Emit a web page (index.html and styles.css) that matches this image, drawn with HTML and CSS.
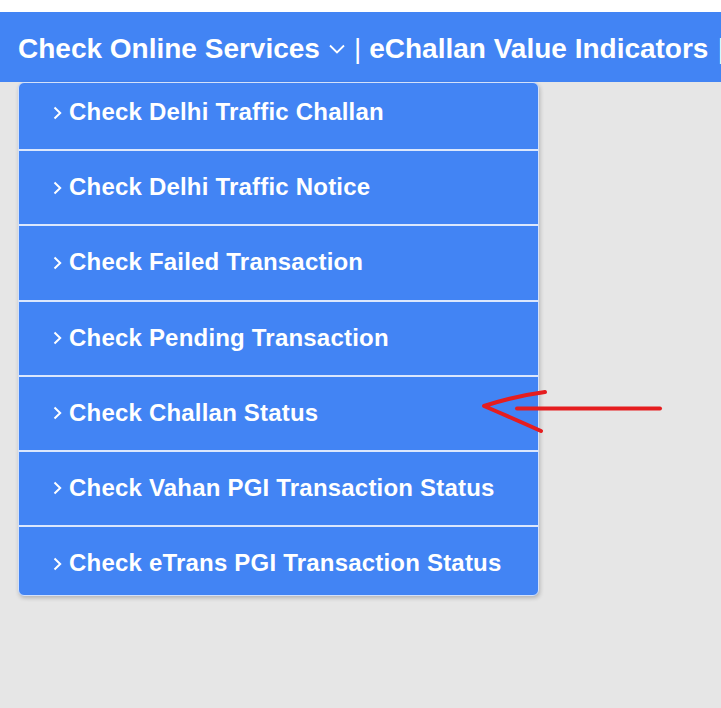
FILE: index.html
```html
<!DOCTYPE html>
<html lang="en">
<head>
<meta charset="utf-8">
<title>Check Online Services</title>
<link rel="stylesheet" href="styles.css">
</head>
<body>
<div class="top-strip"></div>
<header class="nav">
  <span class="nav-title">Check Online Services</span>
  <svg class="nav-caret" width="16" height="10" viewBox="0 0 16 10"><polyline points="1,1.5 8,8.5 15,1.5" fill="none" stroke="#fff" stroke-width="1.8"/></svg>
  <span class="nav-sep">|</span>
  <span class="nav-title">eChallan Value Indicators</span>
  <span class="nav-sep">|</span>
</header>
<main class="page">
  <ul class="dropdown">
    <li class="item"><svg class="chev" width="9" height="14" viewBox="0 0 9 14"><polyline points="1.5,1.5 7.2,7 1.5,12.5" fill="none" stroke="#fff" stroke-width="2"/></svg><span>Check Delhi Traffic Challan</span></li>
    <li class="item"><svg class="chev" width="9" height="14" viewBox="0 0 9 14"><polyline points="1.5,1.5 7.2,7 1.5,12.5" fill="none" stroke="#fff" stroke-width="2"/></svg><span>Check Delhi Traffic Notice</span></li>
    <li class="item"><svg class="chev" width="9" height="14" viewBox="0 0 9 14"><polyline points="1.5,1.5 7.2,7 1.5,12.5" fill="none" stroke="#fff" stroke-width="2"/></svg><span>Check Failed Transaction</span></li>
    <li class="item"><svg class="chev" width="9" height="14" viewBox="0 0 9 14"><polyline points="1.5,1.5 7.2,7 1.5,12.5" fill="none" stroke="#fff" stroke-width="2"/></svg><span>Check Pending Transaction</span></li>
    <li class="item"><svg class="chev" width="9" height="14" viewBox="0 0 9 14"><polyline points="1.5,1.5 7.2,7 1.5,12.5" fill="none" stroke="#fff" stroke-width="2"/></svg><span>Check Challan Status</span></li>
    <li class="item"><svg class="chev" width="9" height="14" viewBox="0 0 9 14"><polyline points="1.5,1.5 7.2,7 1.5,12.5" fill="none" stroke="#fff" stroke-width="2"/></svg><span>Check Vahan PGI Transaction Status</span></li>
    <li class="item"><svg class="chev" width="9" height="14" viewBox="0 0 9 14"><polyline points="1.5,1.5 7.2,7 1.5,12.5" fill="none" stroke="#fff" stroke-width="2"/></svg><span>Check eTrans PGI Transaction Status</span></li>
  </ul>
</main>
<svg class="annotation" width="721" height="708" viewBox="0 0 721 708">
  <path d="M545 392 Q515 396 484 406 Q512 418 541 431" fill="none" stroke="#e51d1f" stroke-width="4" stroke-linecap="round" stroke-linejoin="round"/>
  <path d="M517 408.5 L660 408.5" fill="none" stroke="#e51d1f" stroke-width="4" stroke-linecap="round"/>
</svg>
</body>
</html>
```
FILE: styles.css
```css
* { box-sizing: border-box; }
html, body {
  margin: 0;
  padding: 0;
  height: 100%;
}
body {
  background: #e6e6e6;
  font-family: "Liberation Sans", Arial, sans-serif;
  overflow: hidden;
  position: relative;
}
.top-strip {
  height: 12px;
  background: #ffffff;
}
.nav {
  height: 70px;
  padding-top: 3px;
  background: #4284f4;
  color: #ffffff;
  display: flex;
  align-items: center;
  padding-left: 18px;
  white-space: nowrap;
  overflow: hidden;
  font-size: 28px;
  font-weight: bold;
}
.nav-caret {
  margin-left: 9px;
  margin-top: 0;
  flex: none;
}
.nav-sep {
  font-weight: normal;
  margin: 0 8px 0 9px;
}
.page {
  padding-left: 18px;
}
.dropdown {
  list-style: none;
  margin: 0;
  padding: 0;
  width: 521px;
  background: #4284f4;
  border: 1px solid #d3e1fb;
  border-radius: 6px;
  box-shadow: 1px 2px 4px rgba(0, 0, 0, 0.22);
  overflow: hidden;
}
.item {
  display: flex;
  align-items: center;
  gap: 7px;
  padding: 22px 0 23.2px 34px;
  border-top: 2px solid #dbe7fd;
  color: #ffffff;
  font-size: 24px;
  font-weight: bold;
  line-height: 28px;
  letter-spacing: 0.2px;
  white-space: nowrap;
}
.item:first-child {
  border-top: none;
  padding-top: 15px;
}
.item:last-child {
  padding-bottom: 18px;
}
.chev {
  flex: none;
  margin-top: 1px;
}
.annotation {
  position: absolute;
  left: 0;
  top: 0;
  pointer-events: none;
}
```
